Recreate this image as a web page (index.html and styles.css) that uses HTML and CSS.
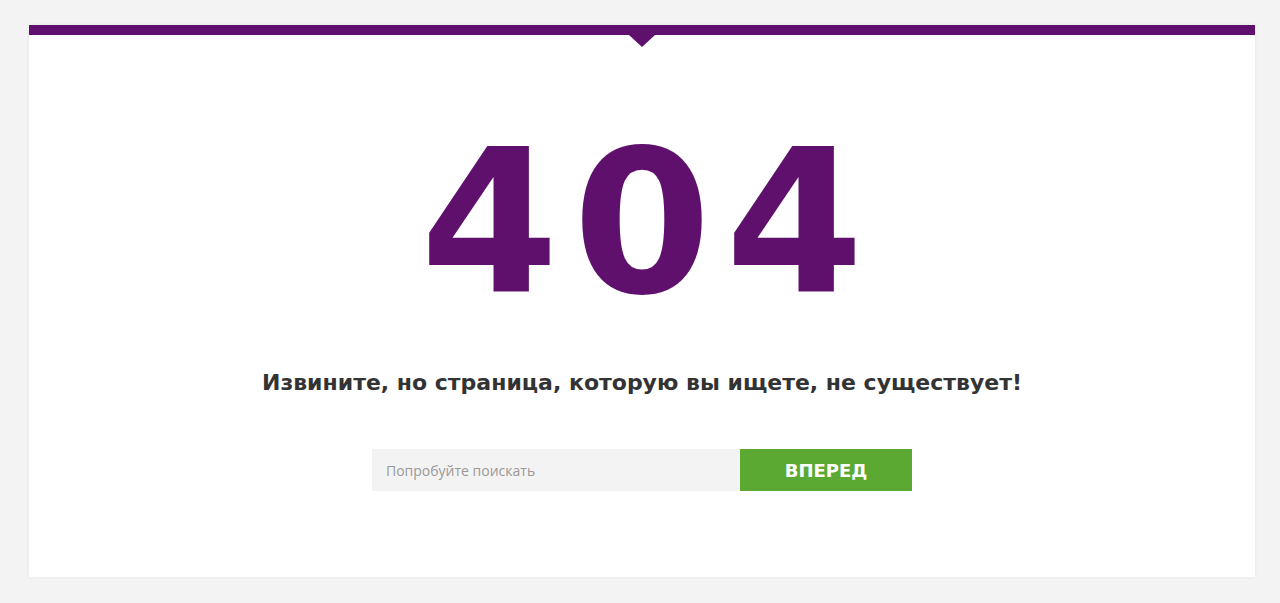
FILE: index.html
```html
<!DOCTYPE html>
<html lang="ru">
<head>
  <meta charset="UTF-8">
  <meta name="viewport" content="width=device-width, initial-scale=1.0">
  <link rel="stylesheet" href="styles.css">
  <title>404</title>
</head>
<body>

<div class="page">
  <div class="card">
    <div class="top-bar"></div>

    <div class="content">
      <div class="code">404</div>
      <h1 class="message">Извините, но страница, которую вы ищете, не существует!</h1>

      <form class="search" onsubmit="return false">
        <input type="text" class="search-input" placeholder="Попробуйте поискать">
        <button type="submit" class="search-btn">ВПЕРЕД</button>
      </form>
    </div>
  </div>
</div>

</body>
</html>
```

FILE: styles.css
```css
html, body {
  margin: 0;
  padding: 0;
}
body {
  background: #f3f3f3;
  font-family: "DejaVu Sans", sans-serif;
}
.page {
  padding: 25px 25px 26px 29px;
}
.card {
  background: #fff;
  height: 552px;
  box-shadow: 0 0 4px rgba(0, 0, 0, 0.06);
  position: relative;
}
.top-bar {
  height: 10px;
  background: #5e106c;
  position: relative;
}
/* small arrow under the bar */
.top-bar::after {
  content: "";
  position: absolute;
  left: 50%;
  top: 10px;
  margin-left: -13px;
  border-left: 13px solid transparent;
  border-right: 13px solid transparent;
  border-top: 12px solid #5e106c;
}
.content {
  display: flex;
  flex-direction: column;
  align-items: center;
  padding-top: 78px;
}
.code {
  font-size: 199px;
  font-weight: 700;
  line-height: 220px;
  color: #5e106c;
  letter-spacing: 14px;
  padding-left: 14px;
}
.message {
  margin: 37px 0 0;
  font-size: 22px;
  font-weight: 700;
  color: #333;
}
.search {
  display: flex;
  margin-top: 54px;
}
.search-input {
  width: 368px;
  height: 42px;
  box-sizing: border-box;
  border: none;
  outline: none;
  background: #f3f3f3;
  padding: 0 14px;
  font-family: "Open Sans", sans-serif;
  font-size: 14px;
  color: #555;
}
.search-input::placeholder {
  color: #999;
}
.search-btn {
  width: 172px;
  height: 42px;
  border: none;
  background: #5ba933;
  color: #fff;
  font-family: "DejaVu Sans", sans-serif;
  font-weight: 700;
  font-size: 18px;
  cursor: pointer;
}
```
